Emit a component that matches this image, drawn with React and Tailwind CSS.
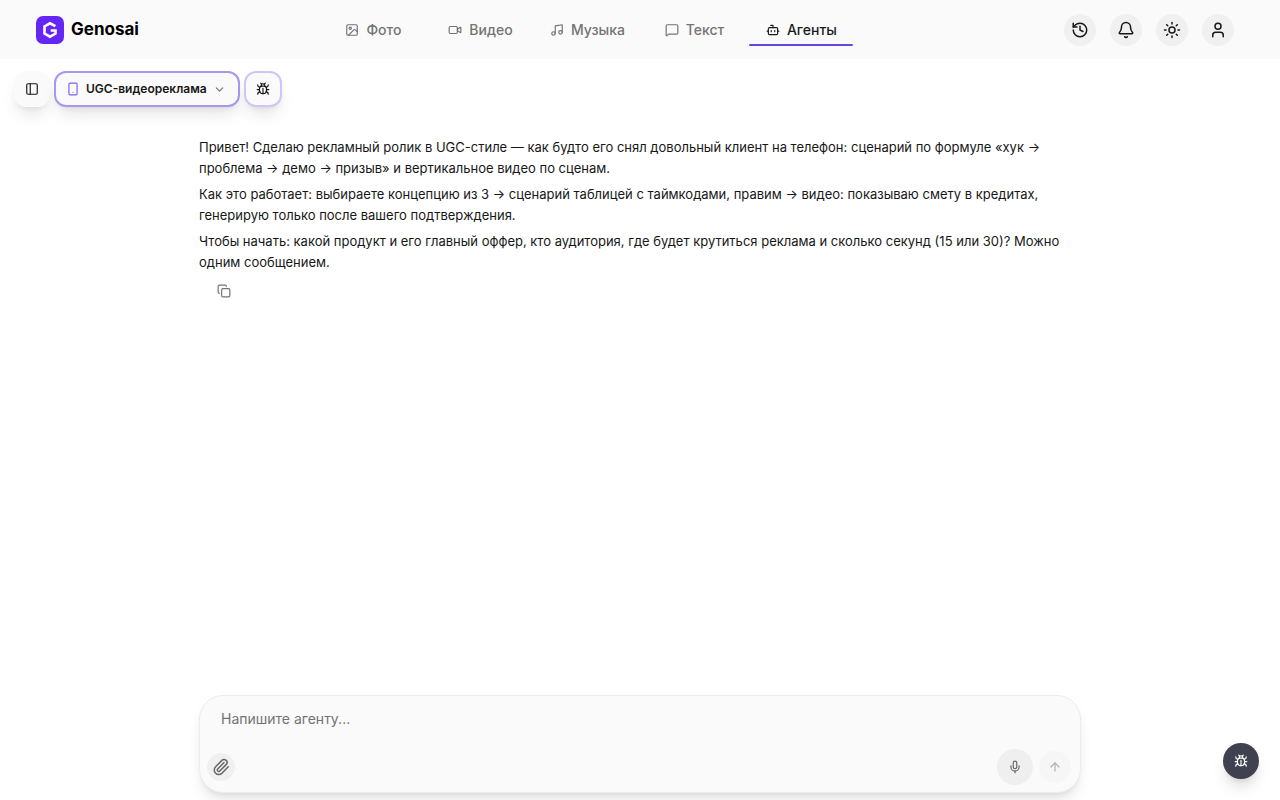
import React, { useState } from "react";
import {
  ArrowUp,
  Bell,
  Bot,
  Bug,
  ChevronDown,
  Copy,
  History,
  Image,
  MessageSquare,
  Mic,
  Music,
  PanelLeft,
  Paperclip,
  Smartphone,
  Sun,
  User,
  Video,
} from "lucide-react";

const tabs = [
  { label: "Фото", icon: Image },
  { label: "Видео", icon: Video },
  { label: "Музыка", icon: Music },
  { label: "Текст", icon: MessageSquare },
  { label: "Агенты", icon: Bot, active: true },
];

const actions = [
  { label: "История", icon: History },
  { label: "Уведомления", icon: Bell },
  { label: "Тема", icon: Sun },
  { label: "Профиль", icon: User },
];

const greeting = [
  "Привет! Сделаю рекламный ролик в UGC-стиле — как будто его снял довольный клиент на телефон: сценарий по формуле «хук → проблема → демо → призыв» и вертикальное видео по сценам.",
  "Как это работает: выбираете концепцию из 3 → сценарий таблицей с таймкодами, правим → видео: показываю смету в кредитах, генерирую только после вашего подтверждения.",
  "Чтобы начать: какой продукт и его главный оффер, кто аудитория, где будет крутиться реклама и сколько секунд (15 или 30)? Можно одним сообщением.",
];

const Logo = () => (
  <a href="#" className="flex items-center gap-[7px]">
    <svg viewBox="0 0 28 28" className="h-7 w-7" aria-hidden="true">
      <rect width="28" height="28" rx="7" fill="#6425f5" />
      <path
        d="M19.4 10.2 14 7.3 8.5 10.5v7l5.5 3.2 5.5-3.2v-3h-4.8"
        fill="none"
        stroke="#fff"
        strokeWidth="2.6"
      />
    </svg>
    <span className="text-[17px] font-bold text-black">Genosai</span>
  </a>
);

const Header = () => (
  <header className="flex h-[59px] items-center bg-[#fafafa] pl-9 pr-[46px]">
    <Logo />
    <nav className="flex flex-1 justify-center pr-7">
      <div className="grid grid-cols-5 gap-[3px]">
        {tabs.map(({ label, icon: Icon, active }) => (
          <a
            key={label}
            href="#"
            className={
              active
                ? "relative flex h-8 w-[104px] items-center justify-center gap-[7px] text-sm font-medium text-[#1a1a1a]"
                : "relative flex h-8 w-[104px] items-center justify-center gap-[7px] text-sm font-medium text-[#737373]"
            }
          >
            <Icon size={14} />
            {label}
            {active && (
              <span className="absolute inset-x-0 bottom-0 h-0.5 rounded-full bg-[#6644e0]" />
            )}
          </a>
        ))}
      </div>
    </nav>
    <div className="flex gap-[14px]">
      {actions.map(({ label, icon: Icon }) => (
        <button
          key={label}
          aria-label={label}
          className="flex h-8 w-8 items-center justify-center rounded-full bg-[#f0f0f0] text-[#171717]"
        >
          <Icon size={18} />
        </button>
      ))}
    </div>
  </header>
);

const Toolbar = () => (
  <div className="flex gap-1 px-3.5 pt-3">
    <button
      aria-label="Боковая панель"
      className="flex h-9 w-9 items-center justify-center rounded-xl bg-[#fafafa] text-[#171717] shadow-lg shadow-black/10"
    >
      <PanelLeft size={14} />
    </button>
    <button className="flex h-9 items-center gap-1.5 rounded-xl border-2 border-[#a996ee] bg-[#fafafa] pl-2.5 pr-3 text-xs font-semibold text-[#171717] shadow-lg shadow-black/10">
      <Smartphone size={14} className="text-[#7c5cf0]" />
      UGC-видеореклама
      <ChevronDown size={13} className="text-[#737373]" />
    </button>
    <button
      aria-label="Сообщить об ошибке"
      className="flex h-9 w-[38px] items-center justify-center rounded-xl border-2 border-[#d0c5f5] bg-[#fafafa] text-[#171717] shadow-lg shadow-black/10"
    >
      <Bug size={14} />
    </button>
  </div>
);

const Composer = () => {
  const [message, setMessage] = useState("");

  return (
    <form
      onSubmit={(e) => e.preventDefault()}
      className="mx-auto w-full max-w-[882px] rounded-3xl border border-[#ececec] bg-[#fafafa] pb-[7px] pl-[7px] pr-[9px] pt-[13px] shadow-lg shadow-black/10"
    >
      <textarea
        aria-label="Сообщение"
        rows={1}
        value={message}
        onChange={(e) => setMessage(e.target.value)}
        placeholder="Напишите агенту..."
        className="block h-10 w-full resize-none px-3.5 text-sm text-[#171717] outline-none placeholder:text-[#737373]"
      />
      <div className="flex items-center">
        <button
          type="button"
          aria-label="Прикрепить файл"
          className="flex h-7 w-7 items-center justify-center rounded-full bg-[#f0f0f0] text-[#666666]"
        >
          <Paperclip size={18} />
        </button>
        <button
          type="button"
          aria-label="Голосовой ввод"
          className="ml-auto flex h-9 w-9 items-center justify-center rounded-full bg-[#efefef] text-[#666666]"
        >
          <Mic size={14} />
        </button>
        <button
          type="submit"
          aria-label="Отправить"
          className="ml-1.5 flex h-8 w-8 items-center justify-center rounded-full bg-[#f6f6f6] text-[#b0b0b0]"
        >
          <ArrowUp size={14} />
        </button>
      </div>
    </form>
  );
};

const App = () => {
  return (
    <div className="flex min-h-screen flex-col bg-white font-['Inter',sans-serif]">
      <Header />
      <Toolbar />
      <main className="mx-auto w-full max-w-[882px] flex-1 pt-[30px]">
        <div className="flex flex-col gap-[5px] text-[13px] leading-[21px] text-[#171717]">
          {greeting.map((text) => (
            <p key={text}>{text}</p>
          ))}
        </div>
        <button aria-label="Копировать" className="ml-[18px] mt-[11px] block text-[#737373]">
          <Copy size={14} />
        </button>
      </main>
      <div className="pb-[7px]">
        <Composer />
      </div>
      <button
        aria-label="Отладка"
        className="fixed bottom-[21px] right-[21px] flex h-9 w-9 items-center justify-center rounded-full bg-[#3f4150] text-white shadow-lg shadow-black/15"
      >
        <Bug size={14} />
      </button>
    </div>
  );
};

export default App;
